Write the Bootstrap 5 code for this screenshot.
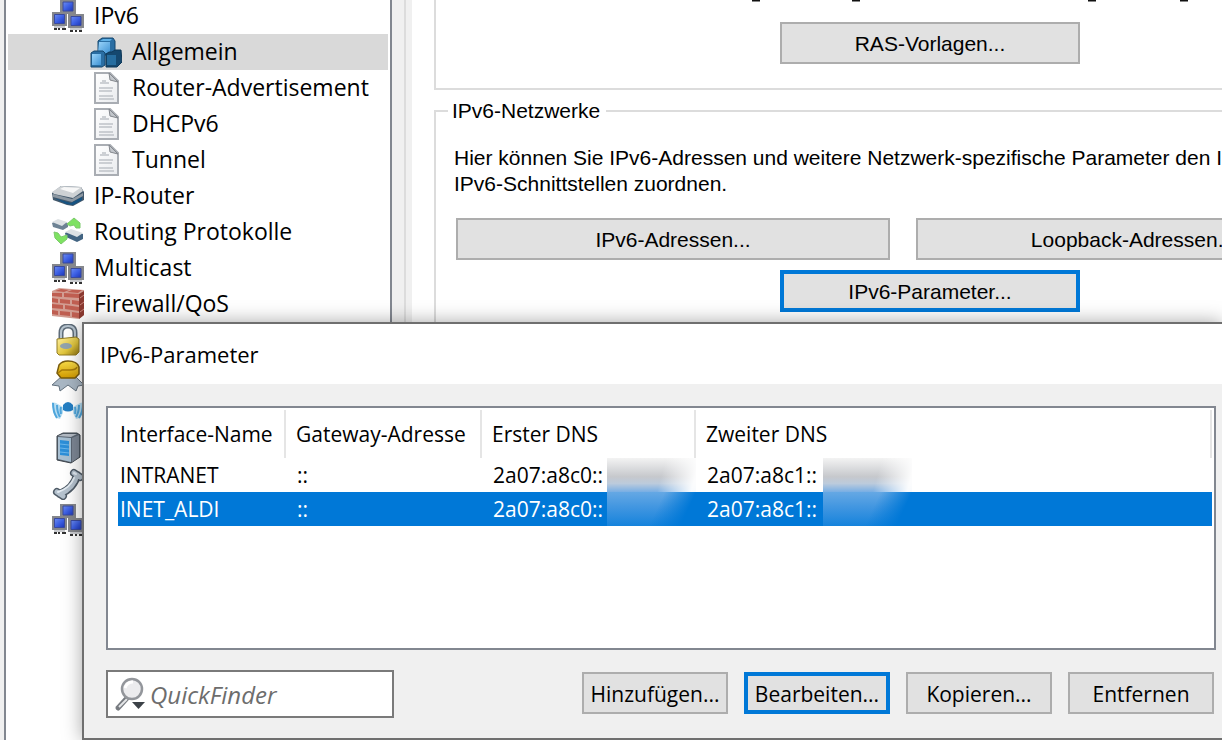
<!DOCTYPE html>
<html lang="de">
<head>
<meta charset="utf-8">
<meta name="viewport" content="width=device-width, initial-scale=1">
<title>IPv6-Parameter</title>
<link href="https://cdn.jsdelivr.net/npm/bootstrap@5.3.0/dist/css/bootstrap.min.css" rel="stylesheet">
<style>
  body { background: #f0f0f0; color: #000; font-family: "Open Sans", sans-serif; }
  .workspace { padding-left: 4px; }
  .tree { width: 388px; background: #fff; border: solid #828790; border-width: 0 2px; font-size: 23px; line-height: 34px; }
  .tree ul { margin-top: -2px; }
  .tree a { height: 36px; margin: 0 2px; padding: 0 0 2px 44px; gap: 10px; color: #000; }
  .tree a.child { padding-left: 82px; }
  .tree a.active { background: #d9d9d9; }
  .tree svg { width: 32px; height: 32px; margin-top: 2px; flex: none; }
  .splitter { width: 20px; padding-left: 12px; }
  .splitter::before { content: ""; display: block; height: 100%; width: 2px; background: #dcdcdc; }
  .settings { background: #fff; padding-left: 22px; font-family: "Liberation Sans", Arial, sans-serif; font-size: 21px; line-height: 26px; }
  .group { border: 2px solid #dcdcdc; width: 1000px; padding: 0 18px 40px; }
  .group-top { height: 90px; border-top: 0; margin-bottom: 8px; }
  .group legend { font-size: 21px; line-height: 26px; width: auto; padding: 0 6px 0 4px; margin: 0 0 21px -6px; float: none; }
  .cut-line { height: 22px; }
  .cut-line svg { display: block; }
  .win-btn { height: 42px; border: 2px solid #adadad; border-radius: 0; background: #e1e1e1; color: #000; font: inherit; padding: 2px 0 0; line-height: 36px; white-space: nowrap; flex: none; }
  .win-btn.focused { border: 4px solid #0078d7; line-height: 32px; }
  .win-btn:hover { background: #e5f1fb; color: #000; border-color: #0078d7; }
  .w-mid { width: 300px; margin-left: 326px; }
  .w-wide { width: 434px; }
  .wide-row { gap: 26px; margin: 21px 0 10px 2px; }
  .param-dialog { left: 82px; right: 0; top: 322px; bottom: 0; background: #f0f0f0; border: 2px solid #6f6f6f; border-right: 0; box-shadow: 0 0 18px rgba(0,0,0,.35); font-size: 21px; }
  .dialog-title { height: 60px; padding-left: 16px; font-size: 22px; font-weight: 400; line-height: 61px; margin: 0; background: #fff; }
  .dialog-main { padding: 22px 6px 20px 22px; }
  .list-frame { background: #fff; border: 2px solid #828790; padding: 2px 2px 0 10px; }
  .param-table { width: 100%; table-layout: fixed; line-height: 34px; border-collapse: separate; border-spacing: 0; }
  .param-table col:nth-child(1) { width: 168px; }
  .param-table col:nth-child(2) { width: 196px; }
  .param-table col:nth-child(3) { width: 214px; }
  .param-table th { height: 48px; font-weight: 400; padding: 0 0 0 10px; border-right: 2px solid #e5e5e5; white-space: nowrap; }
  .param-table td { padding: 0 0 0 11px; height: 34px; white-space: nowrap; }
  .param-table th:first-child, .param-table td:first-child { padding-left: 2px; }
  .param-table .selected { color: #fff; background: #0078d7; }
  .prefix { width: 114px; }
  .prefix-2 { width: 116px; }
  .redacted { width: 89px; height: 34px; background: linear-gradient(105deg, transparent 60%, rgba(255,255,255,.95) 95%), linear-gradient(#f3f3f3, #c6c8cc 55%, #bccbdc 75%, #78aee4); }
  .selected .redacted { background: linear-gradient(115deg, transparent 55%, #0078d7 85%), linear-gradient(#65a8e4, #3d94e0 50%, #1583dc); }
  .dialog-actions { gap: 16px; margin-top: 20px; padding-right: 2px; }
  .finder { width: 288px; height: 48px; background: #fff; border: 2px solid #7a7a7a; padding-left: 6px; }
  .finder input { font-size: 24px; font-style: italic; line-height: 36px; width: 230px; padding: 2px 0 0; border: 0; outline: 0; background: none; margin-left: 2px; }
  .finder input::placeholder { color: #6d6d6d; opacity: 1; }
  .dialog-actions .win-btn { width: 146px; margin-top: 2px; }
</style>
</head>
<body class="vh-100 overflow-hidden position-relative">

<svg class="position-absolute" width="0" height="0" aria-hidden="true">
  <defs>
    <linearGradient id="gBlue" x1="0" y1="0" x2="1" y2="1"><stop offset="0" stop-color="#6d8df0"/><stop offset=".5" stop-color="#3d60e4"/><stop offset="1" stop-color="#1c36b8"/></linearGradient>
    <linearGradient id="gCube" x1="0" y1="0" x2="1" y2="1"><stop offset="0" stop-color="#9ad4fa"/><stop offset="1" stop-color="#3f93d4"/></linearGradient>
    <linearGradient id="gPage" x1="0" y1="0" x2="1" y2="1"><stop offset="0" stop-color="#fff"/><stop offset="1" stop-color="#e9ebee"/></linearGradient>
    <linearGradient id="gGold" x1="0" y1="0" x2="1" y2="1"><stop offset="0" stop-color="#fff0a0"/><stop offset=".6" stop-color="#dfc43c"/><stop offset="1" stop-color="#8f7412"/></linearGradient>
    <linearGradient id="gDome" x1="0" y1="0" x2="0" y2="1"><stop offset="0" stop-color="#f8dc48"/><stop offset="1" stop-color="#d29b00"/></linearGradient>
  </defs>
  <symbol id="i-net" viewBox="0 0 32 32">
    <g id="pcTop"><path d="M8 0h16v14H8z" fill="#85878c"/><path d="M11 2h10v9H11z" fill="url(#gBlue)" stroke="#3a4a9c"/></g>
    <path d="M0 12h15v14H0z" fill="#85878c"/><path d="M2.500 14.500h10v9h-10z" fill="url(#gBlue)" stroke="#3a4a9c"/><path d="M2 26h11v2H2z" fill="#c9cbcf"/><path d="M2 28h3v2H2zM6 28h2v2H6zM10 28h4v2h-4z" fill="#333"/>
    <path d="M16 14h16v14H16z" fill="#85878c"/><path d="M19 16.500h10v9H19z" fill="url(#gBlue)" stroke="#3a4a9c"/><path d="M18 28h12v2H18z" fill="#c9cbcf"/><path d="M18 30h3v2h-3zM23 30h2v2h-2zM27 30h3v2h-3z" fill="#333"/>
  </symbol>
  <symbol id="i-cubes" viewBox="0 0 32 32">
    <path d="M8 5l4-3h11l2 3v12l-3 2H8z" fill="#2a6ea3" stroke="#14476f"/><path d="M9 6h11v11H8z" fill="url(#gCube)"/><path d="M10 5l3-2h9l-2 2z" fill="#5fb0e6"/>
    <path d="M1 17l3-2h9l2 2v12l-3 2H1z" fill="#2a6ea3" stroke="#14476f"/><path d="M2 18h9v11H2z" fill="url(#gCube)"/>
    <path d="M16 18l3-2h3l3-2h6l1 12-5 5H16z" fill="#15486f" stroke="#0f3858"/><path d="M17 19h9v10h-9z" fill="#266d9f"/>
  </symbol>
  <symbol id="i-page" viewBox="0 0 32 32">
    <path d="M5 1h15l8 8v22H5z" fill="url(#gPage)" stroke="#a9adb3" stroke-width="2"/><path d="M19 1l9 9-8-2z" fill="#c2c6cb" stroke="#83878d"/>
    <path d="M12 9h4M10 11h9M9 16h14M9 19h13M9 24h14M9 27h15" stroke="#bfc2c7" stroke-width="1.500"/>
  </symbol>
  <symbol id="i-router" viewBox="0 0 32 32">
    <path d="M0 13L9 6l20 1 3 5v8l-11 6-6-1L1 20z" fill="#43586b"/><path d="M0 12l9-6 20 1 2 4-10 7L2 14z" fill="#cdd1d4"/><path d="M8 9l4-2 16 1-7 5z" fill="#f7f7f7"/><path d="M1 14l19 5 11-6v3l-11 6L1 17z" fill="#8d98a2"/><path d="M2 18l17 5 11-6v3l-9 5-7-1z" fill="#155382"/>
  </symbol>
  <symbol id="i-routing" viewBox="0 0 32 32">
    <path d="M0 7l6-3 10 3v4l-5 3L1 11z" fill="#6d8294"/><path d="M0 6l6-3 9 3-5 4z" fill="#dde1e4"/><path d="M13 17l6-3 12 4v5l-6 3-11-5z" fill="#426482"/><path d="M13 16l6-3 12 4-6 4z" fill="#dde1e4"/>
    <path d="M15 8l7-6 6 5v5h-4l-2-3-4 1z" fill="#7ee262" stroke="#7cc96c"/><path d="M2 16l4 1 3 4 6-2 0 4-6 5-6-6z" fill="#7ee262" stroke="#7cc96c"/>
  </symbol>
  <symbol id="i-wall" viewBox="0 0 32 32">
    <path d="M0 3l7-3 25 2v25l-5 4L0 28z" fill="#d29d92"/><path d="M27 6l5-3v24l-5 4z" fill="#8b3930"/>
    <path d="M0 5h10v4L0 8zM12 5l15 1v4L12 9zM0 10l6 1v4l-6-1zM8 11l10 1v4L8 15zM20 12l7 1v4l-7-1zM0 16l11 1v4L0 20zM13 17l14 2v4l-14-2zM0 22l6 1v4l-6-1zM8 23l10 1v4L8 27zM20 24l7 1v5l-7-1zM3 3l6-2 8 1-5 2zM15 4l5-2h10l-4 3z" fill="#bf5e51"/>
    <path d="M28 10l4-3M28 17l4-3M28 24l4-3" stroke="#c9877b"/>
  </symbol>
  <symbol id="i-lock" viewBox="0 0 32 32">
    <path d="M9 15V9q0-7 7-7t7 7v6" fill="none" stroke="#5e6c79" stroke-width="5"/><path d="M9 15V9q0-7 7-7t7 7v6" fill="none" stroke="#b6c4cf" stroke-width="2"/>
    <path d="M5 15l19-2 3 2v13l-3 3H7l-2-2z" fill="url(#gGold)" stroke="#927c24"/><ellipse cx="14" cy="22" rx="6" ry="3" fill="#92a3ad"/>
  </symbol>
  <symbol id="i-cert" viewBox="0 0 32 32">
    <path d="M10 16L0 25l7 1 1 5 8-6 8 6 2-5 6-1-9-9z" fill="#a9b7c4" stroke="#64727f"/><path d="M7 5q3-4 9-4 9 0 11 6v7l-4 4H9l-4-5z" fill="url(#gDome)" stroke="#7a5c0d" stroke-width="1.500"/><path d="M6 13l4-3h8q6 0 7-3" fill="none" stroke="#a87c08" stroke-width="1.500"/>
  </symbol>
  <symbol id="i-wlan" viewBox="0 0 32 32">
    <path d="M0 6l4 1 7 4v6l-3 6-4-1-3-6z" fill="#b9def2"/><path d="M32 6l-4 1-7 4v6l3 6 4-1 3-6z" fill="#b9def2"/>
    <path d="M1 7q0 9 4 15M5 9q0 7 3 12M9 11q-1 3 0 7M31 7q0 9-4 15M27 9q0 7-3 12M23 11q1 3 0 7" fill="none" stroke="#4fa6dc" stroke-width="2"/><path d="M11 9q5-6 10 0v5q-5 3-10 0z" fill="#247fc4"/>
  </symbol>
  <symbol id="i-server" viewBox="0 0 32 32">
    <path d="M5 4l6-3h14l3 2v22l-9 6-14-3z" fill="#5b6673" stroke="#3d444c"/><path d="M6 4l5-2h14l-6 3z" fill="#b4bbc4"/><path d="M6 5l13 1v24L6 27z" fill="#a9c0d2"/><path d="M8 8l9 1v15L8 23z" fill="#2d8fd8"/><path d="M8 12l9 1M8 16l9 1M8 20l9 1" stroke="#6bb7ec"/><path d="M20 6l7-3v22l-7 5z" fill="#7d8795"/>
  </symbol>
  <symbol id="i-phone" viewBox="0 0 32 32">
    <g fill="none" stroke-linecap="round" stroke-linejoin="round">
      <path d="M22 5l6 4M5 24l6 4M25 7q-3 13-17 19" stroke="#4f5b67" stroke-width="8"/><path d="M22 5l6 4M5 24l6 4M25 7q-3 13-17 19" stroke="#b5c2ce" stroke-width="5"/><path d="M22 5l2 1M6 24q12-4 16-14" stroke="#e3ebf2" stroke-width="2"/>
    </g>
  </symbol>
</svg>

<div class="workspace d-flex h-100">
  <nav class="tree flex-shrink-0 overflow-hidden" aria-label="Konfiguration">
    <ul class="list-unstyled mb-0">
      <li><a href="#" class="d-flex align-items-center text-decoration-none"><svg><use href="#i-net"/></svg>IPv6</a>
        <ul class="list-unstyled m-0">
          <li><a href="#" class="child active d-flex align-items-center text-decoration-none"><svg><use href="#i-cubes"/></svg>Allgemein</a></li>
          <li><a href="#" class="child d-flex align-items-center text-decoration-none"><svg><use href="#i-page"/></svg>Router-Advertisement</a></li>
          <li><a href="#" class="child d-flex align-items-center text-decoration-none"><svg><use href="#i-page"/></svg>DHCPv6</a></li>
          <li><a href="#" class="child d-flex align-items-center text-decoration-none"><svg><use href="#i-page"/></svg>Tunnel</a></li>
        </ul>
      </li>
      <li><a href="#" class="d-flex align-items-center text-decoration-none"><svg><use href="#i-router"/></svg>IP-Router</a></li>
      <li><a href="#" class="d-flex align-items-center text-decoration-none"><svg><use href="#i-routing"/></svg>Routing Protokolle</a></li>
      <li><a href="#" class="d-flex align-items-center text-decoration-none"><svg><use href="#i-net"/></svg>Multicast</a></li>
      <li><a href="#" class="d-flex align-items-center text-decoration-none"><svg><use href="#i-wall"/></svg>Firewall/QoS</a></li>
      <li><a href="#" class="d-flex align-items-center"><svg><use href="#i-lock"/></svg></a></li>
      <li><a href="#" class="d-flex align-items-center"><svg><use href="#i-cert"/></svg></a></li>
      <li><a href="#" class="d-flex align-items-center"><svg><use href="#i-wlan"/></svg></a></li>
      <li><a href="#" class="d-flex align-items-center"><svg><use href="#i-server"/></svg></a></li>
      <li><a href="#" class="d-flex align-items-center"><svg><use href="#i-phone"/></svg></a></li>
      <li><a href="#" class="d-flex align-items-center"><svg><use href="#i-net"/></svg></a></li>
    </ul>
  </nav>
  <div class="splitter flex-shrink-0"></div>

  <main class="settings flex-grow-1 overflow-hidden">
    <section class="group group-top">
      <div class="cut-line"><svg width="760" height="2" aria-hidden="true"><path d="M298 0h8M398 0h8M634 0h8M726 0h8" stroke="#111" stroke-width="3"/></svg></div>
      <button type="button" class="btn win-btn w-mid">RAS-Vorlagen...</button>
    </section>
    <fieldset class="group">
      <legend>IPv6-Netzwerke</legend>
      <p class="mb-0 text-nowrap">Hier können Sie IPv6-Adressen und weitere Netzwerk-spezifische Parameter den I<br>IPv6-Schnittstellen zuordnen.</p>
      <div class="wide-row d-flex">
        <button type="button" class="btn win-btn w-wide">IPv6-Adressen...</button>
        <button type="button" class="btn win-btn w-wide">Loopback-Adressen...</button>
      </div>
      <button type="button" class="btn win-btn focused w-mid">IPv6-Parameter...</button>
    </fieldset>
  </main>
</div>

<div class="param-dialog position-absolute d-flex flex-column" role="dialog" aria-labelledby="dlgTitle">
  <h1 class="dialog-title" id="dlgTitle">IPv6-Parameter</h1>
  <div class="dialog-main flex-grow-1 d-flex flex-column">
    <div class="list-frame flex-grow-1">
      <table class="param-table">
        <colgroup><col><col><col><col></colgroup>
        <thead><tr><th>Interface-Name</th><th>Gateway-Adresse</th><th>Erster DNS</th><th>Zweiter DNS</th></tr></thead>
        <tbody>
          <tr><td>INTRANET</td><td>::</td>
            <td><div class="d-flex"><span class="prefix">2a07:a8c0::</span><span class="redacted"></span></div></td>
            <td><div class="d-flex"><span class="prefix prefix-2">2a07:a8c1::</span><span class="redacted"></span></div></td></tr>
          <tr class="selected"><td>INET_ALDI</td><td>::</td>
            <td><div class="d-flex"><span class="prefix">2a07:a8c0::</span><span class="redacted"></span></div></td>
            <td><div class="d-flex"><span class="prefix prefix-2">2a07:a8c1::</span><span class="redacted"></span></div></td></tr>
        </tbody>
      </table>
    </div>
    <div class="dialog-actions d-flex">
      <label class="finder d-flex align-items-center me-auto" aria-label="QuickFinder">
        <svg width="34" height="36" viewBox="0 0 34 36" aria-hidden="true">
          <path d="M14 21L4 32" stroke="#777b80" stroke-width="5" stroke-linecap="round"/><path d="M13 23L5 31" stroke="#e4e6e8" stroke-width="2"/>
          <circle cx="18" cy="13" r="10" fill="#ececee" stroke="#93969b" stroke-width="2.500"/><path d="M11 12q2-6 8-6" fill="none" stroke="#fff" stroke-width="3"/>
          <path d="M18 26h13l-6.500 7z" fill="#3c4248"/>
        </svg>
        <input type="text" placeholder="QuickFinder">
      </label>
      <button type="button" class="btn win-btn">Hinzufügen...</button>
      <button type="button" class="btn win-btn focused">Bearbeiten...</button>
      <button type="button" class="btn win-btn">Kopieren...</button>
      <button type="button" class="btn win-btn">Entfernen</button>
    </div>
  </div>
</div>

<script src="https://cdn.jsdelivr.net/npm/bootstrap@5.3.0/dist/js/bootstrap.bundle.min.js"></script>
</body>
</html>
